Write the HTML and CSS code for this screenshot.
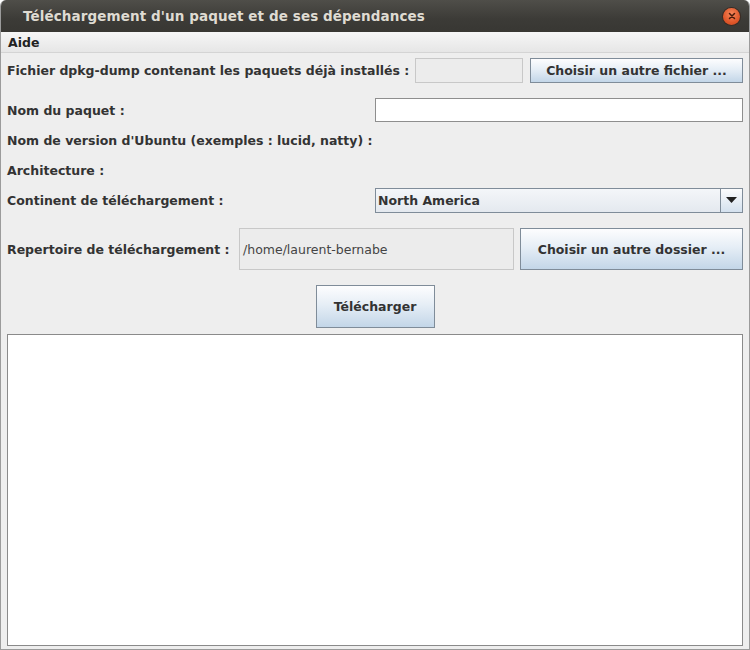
FILE: index.html
```html
<!DOCTYPE html>
<html lang="fr">
<head>
    <meta charset="UTF-8">
    <title>Téléchargement d'un paquet et de ses dépendances</title>
    <link rel="stylesheet" href="styles.css">
</head>
<body>
    <div class="window">
        <div class="titlebar">
            <span class="title">Téléchargement d'un paquet et de ses dépendances</span>
            <span class="close">
                <svg width="10" height="10" viewBox="0 0 10 10"><path d="M2.5 2.5 L7.5 7.5 M7.5 2.5 L2.5 7.5" stroke="#4a1a0a" stroke-width="1.5" stroke-linecap="round"/></svg>
            </span>
        </div>
        <div class="menubar"><span class="menu">Aide</span></div>

        <div class="content">
            <div class="row row-first">
                <label class="lbl grow">Fichier dpkg-dump contenant les paquets déjà installés :</label>
                <div class="field field-disabled field-dump"></div>
                <button class="btn btn-file">Choisir un autre fichier ...</button>
            </div>

            <div class="row row-gap">
                <label class="lbl grow">Nom du paquet :</label>
                <input type="text" class="textinput">
            </div>

            <div class="row">
                <label class="lbl">Nom de version d'Ubuntu (exemples : lucid, natty) :</label>
            </div>

            <div class="row">
                <label class="lbl">Architecture :</label>
            </div>

            <div class="row">
                <label class="lbl grow">Continent de téléchargement :</label>
                <div class="combo">
                    <span class="combo-value">North America</span>
                    <span class="combo-arrow">
                        <svg width="11" height="6" viewBox="0 0 11 6"><path d="M0 0 H11 L5.5 6 Z" fill="#222"/></svg>
                    </span>
                </div>
            </div>

            <div class="row row-tall">
                <label class="lbl grow">Repertoire de téléchargement :</label>
                <div class="field field-disabled field-dir">/home/laurent-bernabe</div>
                <button class="btn btn-dir">Choisir un autre dossier ...</button>
            </div>

            <div class="row-center">
                <button class="btn btn-download">Télécharger</button>
            </div>

            <div class="output"></div>
        </div>
    </div>
</body>
</html>
```

FILE: styles.css
```css
html, body{
    margin: 0;
    padding: 0;
    background-color: #ffffff;
}

.window{
    width: 750px;
    height: 650px;
    box-sizing: border-box;
    background-color: #eeeeee;
    border: 1px solid #9b9b9b;
    border-top: none;
    border-radius: 6px 6px 0 0;
    overflow: hidden;
    font-family: "DejaVu Sans", sans-serif;
    color: #333333;
}

.titlebar{
    height: 32px;
    display: flex;
    align-items: center;
    justify-content: space-between;
    padding: 0 9px 0 22px;
    background: linear-gradient(#4f4e49, #3c3b37 60%, #383733);
}

.title{
    color: #dfdbd2;
    font-size: 13.5px;
    font-weight: bold;
    letter-spacing: 0.1px;
}

.close{
    width: 17px;
    height: 17px;
    border-radius: 50%;
    background: radial-gradient(circle at 50% 35%, #f7885c, #e0572a 60%, #c4461d);
    box-shadow: 0 0 0 1px #3a2a22;
    display: flex;
    align-items: center;
    justify-content: center;
}

.menubar{
    height: 20px;
    display: flex;
    align-items: center;
    padding: 0 7px;
    background: linear-gradient(#f6f6f6, #e6e6e6);
    border-bottom: 1px solid #d4d4d4;
}

.menu{
    font-size: 12.5px;
    font-weight: bold;
    color: #222;
}

.content{
    padding: 2px 6px 0 6px;
    display: flex;
    flex-direction: column;
}

.row{
    height: 30px;
    display: flex;
    align-items: center;
}

.row-gap{
    margin-top: 10px;
}

.row-tall{
    height: 42px;
    margin-top: 13px;
}

.lbl{
    font-size: 12.5px;
    font-weight: bold;
    color: #333333;
    white-space: nowrap;
}

.grow{
    flex: 1;
}

.field{
    box-sizing: border-box;
    border: 1px solid #c8c8c8;
    font-size: 12.5px;
    color: #444;
    display: flex;
    align-items: center;
}

.field-disabled{
    background-color: #ececec;
}

.field-dump{
    width: 108px;
    height: 25px;
}

.field-dir{
    width: 275px;
    height: 42px;
    padding-left: 3px;
}

.btn{
    box-sizing: border-box;
    border: 1px solid #7f8c99;
    background: linear-gradient(#fdfdfe, #e6eef6 45%, #c3d6e8);
    font-family: "DejaVu Sans", sans-serif;
    font-size: 12.5px;
    font-weight: bold;
    color: #333333;
    padding: 0;
}

.btn-file{
    width: 213px;
    height: 25px;
    margin-left: 7px;
}

.btn-dir{
    width: 223px;
    height: 42px;
    margin-left: 6px;
}

.btn-download{
    width: 119px;
    height: 43px;
}

.textinput{
    box-sizing: border-box;
    width: 368px;
    height: 24px;
    border: 1px solid #8e8e8e;
    background-color: #ffffff;
    margin: 0;
}

.combo{
    box-sizing: border-box;
    width: 368px;
    height: 25px;
    border: 1px solid #7f8c99;
    background: linear-gradient(#f4f6f9, #e4e9ef);
    display: flex;
    align-items: stretch;
}

.combo-value{
    flex: 1;
    display: flex;
    align-items: center;
    padding-left: 2px;
    font-size: 12.5px;
    font-weight: bold;
    color: #333333;
}

.combo-arrow{
    width: 21px;
    border-left: 1px solid #7f8c99;
    background: linear-gradient(#fbfcfd, #d4e1ee);
    display: flex;
    align-items: center;
    justify-content: center;
}

.row-center{
    display: flex;
    justify-content: center;
    margin-top: 15px;
}

.output{
    box-sizing: border-box;
    margin-top: 6px;
    height: 312px;
    background-color: #ffffff;
    border: 1px solid #8a8a8a;
}
```
